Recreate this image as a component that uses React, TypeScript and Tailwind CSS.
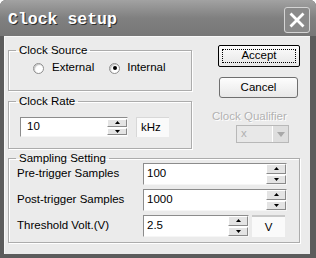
import React from "react";

function Tri({ up, color = "#000" }: { up: boolean; color?: string }) {
  return (
    <svg width="5" height="3" viewBox="0 0 5 3">
      <path d={up ? "M2.5 0 L5 3 L0 3 Z" : "M0 0 L5 0 L2.5 3 Z"} fill={color} />
    </svg>
  );
}

function Spin() {
  return (
    <div className="flex flex-col w-[20px] h-full gap-[1px] bg-white">
      <div className="flex-1 flex items-center justify-center bg-[#e4e4e4] border border-t-white border-l-white border-b-[#8a8a8a] border-r-[#8a8a8a]">
        <Tri up />
      </div>
      <div className="flex-1 flex items-center justify-center bg-[#e4e4e4] border border-t-white border-l-white border-b-[#8a8a8a] border-r-[#8a8a8a]">
        <Tri up={false} />
      </div>
    </div>
  );
}

function Field({ value, width }: { value: string; width: string }) {
  return (
    <div className={`flex h-[22px] ${width} border border-t-[#8c8c8c] border-l-[#8c8c8c] border-b-[#f6f6f6] border-r-[#f6f6f6] bg-white`}>
      <div className="flex-1 flex items-center pl-[3px] text-black">{value}</div>
      <Spin />
    </div>
  );
}

function Radio({ checked }: { checked?: boolean }) {
  return (
    <span className="w-[11px] h-[11px] rounded-full bg-white border border-[#8e8e8e] shadow-[inset_1px_1px_1px_#c4c4c4] flex items-center justify-center">
      {checked && <span className="w-[4px] h-[4px] rounded-full bg-black" />}
    </span>
  );
}

export default function App() {
  const samples = [
    { label: "Pre-trigger Samples", value: "100" },
    { label: "Post-trigger Samples", value: "1000" },
  ];

  return (
    <div className="w-[316px] h-[258px] bg-[#5c5c5c] flex flex-col rounded-t-[6px] overflow-hidden font-['Liberation_Sans',Arial,sans-serif] text-black">
      <div className="h-[36px] shrink-0 flex items-center justify-between pt-[4px] pl-[8px] pr-[6px] bg-gradient-to-b from-[#a2a2a2] via-[#808080] to-[#777777]">
        <span className="font-['Liberation_Mono',monospace] font-bold text-[16.5px] text-white [text-shadow:1px_1px_0_#2e2e2e]">
          Clock setup
        </span>
        <div className="w-[26px] h-[26px] rounded-[3px] border border-[#d4d4d4] bg-[#8a8a8a] flex items-center justify-center">
          <svg width="16" height="16" viewBox="0 0 16 16">
            <path d="M2.5 2.5 L13.5 13.5 M13.5 2.5 L2.5 13.5" stroke="#fff" strokeWidth="2.8" strokeLinecap="square" />
          </svg>
        </div>
      </div>

      <div className="flex-1 ml-[4px] mr-[6px] mb-[4px] bg-[#ebebeb] border-l border-t border-[#f8f8f8] text-[11.5px]">
        <div className="flex pl-[3px] pt-[6px]">
          <div className="w-[184px] flex flex-col">
            <fieldset className="h-[48px] border border-[#acacac] shadow-[inset_1px_1px_0_#fff,1px_1px_0_#fff]">
              <legend className="ml-[7px] px-[3px] leading-[14px]">Clock Source</legend>
              <div className="flex items-center h-[14px] mt-[4px] pl-[24px]">
                <Radio />
                <span className="ml-[8px]">External</span>
                <span className="ml-[15px]">
                  <Radio checked />
                </span>
                <span className="ml-[7px]">Internal</span>
              </div>
            </fieldset>

            <fieldset className="mt-[3px] h-[55px] border border-[#acacac] shadow-[inset_1px_1px_0_#fff,1px_1px_0_#fff]">
              <legend className="ml-[7px] px-[3px] leading-[14px]">Clock Rate</legend>
              <div className="flex items-center mt-[9px] pl-[11px] gap-[8px]">
                <div className="flex h-[20px] w-[108px] border border-t-[#8c8c8c] border-l-[#8c8c8c] border-b-[#f6f6f6] border-r-[#f6f6f6] bg-white">
                  <div className="flex-1 flex items-center pl-[6px]">10</div>
                  <div className="h-full py-[1px]">
                    <Spin />
                  </div>
                </div>
                <div className="h-[20px] w-[33px] flex items-center pl-[4px] bg-[#fafafa] border-t border-l border-[#d8d8d8]">
                  kHz
                </div>
              </div>
            </fieldset>
          </div>

          <div className="flex flex-col pl-[20px]">
            <div className="ml-[6px] mt-[2px] w-[82px] h-[22px] border border-black rounded-[2px] bg-gradient-to-b from-[#fcfcfc] to-[#e6e6e6] p-[3px]">
              <div className="w-full h-full border border-dotted border-black flex items-center justify-center leading-none">
                Accept
              </div>
            </div>
            <div className="ml-[7px] mt-[10px] w-[79px] h-[21px] border border-[#6f6f6f] rounded-[3px] bg-gradient-to-b from-[#fdfdfd] to-[#e8e8e8] flex items-center justify-center">
              Cancel
            </div>
            <div className="mt-[11px] leading-[14px] text-[#b2b2b2] [text-shadow:1px_1px_0_#fff]">Clock Qualifier</div>
            <div className="ml-[24px] mt-[2px] w-[53px] h-[18px] flex border border-[#b8b8b8] bg-[#e8e8e8]">
              <div className="flex-1 flex items-center pl-[4px] text-[#b0b0b0] leading-none">x</div>
              <div className="w-[16px] h-full flex items-center justify-center bg-[#dedede] border-l border-white">
                <svg width="8" height="5" viewBox="0 0 8 5">
                  <path d="M0 0 L8 0 L4 5 Z" fill="#a8a8a8" />
                </svg>
              </div>
            </div>
          </div>
        </div>

        <fieldset className="mt-[2px] ml-[3px] w-[292px] h-[92px] border border-[#acacac] shadow-[inset_1px_1px_0_#fff,1px_1px_0_#fff]">
          <legend className="ml-[7px] px-[3px] leading-[14px]">Sampling Setting</legend>
          <div className="flex flex-col gap-[4px] mt-[-2px] pl-[8px]">
            {samples.map((s) => (
              <div key={s.label} className="flex items-center">
                <span className="w-[126px]">{s.label}</span>
                <Field value={s.value} width="w-[144px]" />
              </div>
            ))}
            <div className="flex items-center">
              <span className="w-[126px]">Threshold Volt.(V)</span>
              <Field value="2.5" width="w-[106px]" />
              <div className="ml-[3px] w-[33px] h-[22px] bg-[#fafafa] border-t-2 border-[#c8c8c8] flex items-start justify-center pt-[2px]">
                V
              </div>
            </div>
          </div>
        </fieldset>
      </div>
    </div>
  );
}
